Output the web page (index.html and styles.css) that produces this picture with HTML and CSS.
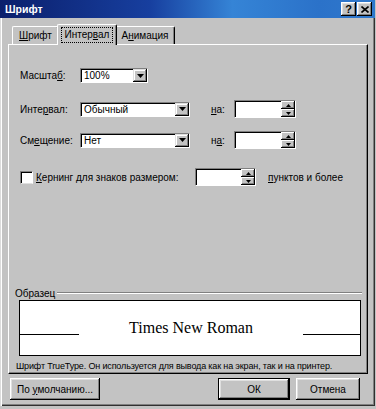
FILE: index.html
```html
<!DOCTYPE html>
<html>
<head>
    <meta charset="utf-8">
    <title>Шрифт</title>
    <link rel="stylesheet" href="styles.css">
</head>
<body>
<div class="window">
    <div class="titlebar">
        <span class="title">Шрифт</span>
        <div class="caption-btns">
            <span class="cbtn cbtn-help">?</span>
            <span class="cbtn">
                <svg width="8" height="7" viewBox="0 0 8 7"><path d="M0.5 0.5 L7.5 6.5 M7.5 0.5 L0.5 6.5" stroke="#000" stroke-width="1.6"/></svg>
            </span>
        </div>
    </div>

    <div class="tabs">
        <div class="tab tab-font"><span><u>Ш</u>рифт</span></div>
        <div class="tab tab-active"><span class="focus">Интер<u>в</u>ал</span></div>
        <div class="tab tab-anim"><span>А<u>н</u>имация</span></div>
    </div>

    <div class="panel">
        <div class="row row-scale">
            <span class="lbl">Масшта<u>б</u>:</span>
            <div class="combo combo-short">
                <span class="combo-val">100%</span>
                <span class="combo-btn"><svg width="7" height="4" viewBox="0 0 7 4"><path d="M0 0 H7 L3.5 4 Z" fill="#000"/></svg></span>
            </div>
        </div>

        <div class="row row-spacing">
            <span class="lbl">Инте<u>р</u>вал:</span>
            <div class="combo combo-long">
                <span class="combo-val">Обычный</span>
                <span class="combo-btn"><svg width="7" height="4" viewBox="0 0 7 4"><path d="M0 0 H7 L3.5 4 Z" fill="#000"/></svg></span>
            </div>
            <span class="lbl-on"><u>н</u>а:</span>
            <div class="spin">
                <span class="spin-val"></span>
                <span class="spin-btns">
                    <span class="spin-btn"><svg width="5" height="3" viewBox="0 0 5 3"><path d="M0 3 H5 L2.5 0 Z" fill="#000"/></svg></span>
                    <span class="spin-btn"><svg width="5" height="3" viewBox="0 0 5 3"><path d="M0 0 H5 L2.5 3 Z" fill="#000"/></svg></span>
                </span>
            </div>
        </div>

        <div class="row row-offset">
            <span class="lbl">См<u>е</u>щение:</span>
            <div class="combo combo-long">
                <span class="combo-val">Нет</span>
                <span class="combo-btn"><svg width="7" height="4" viewBox="0 0 7 4"><path d="M0 0 H7 L3.5 4 Z" fill="#000"/></svg></span>
            </div>
            <span class="lbl-on">н<u>а</u>:</span>
            <div class="spin">
                <span class="spin-val"></span>
                <span class="spin-btns">
                    <span class="spin-btn"><svg width="5" height="3" viewBox="0 0 5 3"><path d="M0 3 H5 L2.5 0 Z" fill="#000"/></svg></span>
                    <span class="spin-btn"><svg width="5" height="3" viewBox="0 0 5 3"><path d="M0 0 H5 L2.5 3 Z" fill="#000"/></svg></span>
                </span>
            </div>
        </div>

        <div class="row row-kern">
            <span class="checkbox"></span>
            <span class="lbl-kern"><u>К</u>ернинг для знаков размером:</span>
            <div class="spin spin-kern">
                <span class="spin-val"></span>
                <span class="spin-btns">
                    <span class="spin-btn"><svg width="5" height="3" viewBox="0 0 5 3"><path d="M0 3 H5 L2.5 0 Z" fill="#000"/></svg></span>
                    <span class="spin-btn"><svg width="5" height="3" viewBox="0 0 5 3"><path d="M0 0 H5 L2.5 3 Z" fill="#000"/></svg></span>
                </span>
            </div>
            <span class="lbl-points"><u>п</u>унктов и более</span>
        </div>

        <div class="group-head">
            <span class="group-title">Образец</span>
            <span class="group-line"></span>
        </div>
        <div class="preview">
            <span class="preview-line preview-line-left"></span>
            <span class="preview-text">Times New Roman</span>
            <span class="preview-line preview-line-right"></span>
        </div>
        <div class="desc">Шрифт TrueType. Он используется для вывода как на экран, так и на принтер.</div>
    </div>

    <div class="buttons">
        <div class="btn btn-default-font"><span>По <u>у</u>молчанию...</span></div>
        <div class="btn-spacer"></div>
        <div class="btn btn-ok"><span>ОК</span></div>
        <div class="btn btn-cancel"><span>Отмена</span></div>
    </div>
</div>
</body>
</html>
```

FILE: styles.css
```css
html, body {
    margin: 0;
    padding: 0;
    background: #c3c3c3;
}
body {
    font-family: 'Liberation Sans', Arial, sans-serif;
    font-size: 10px;
    color: #000;
}
u {
    text-decoration: underline;
    text-underline-offset: 1px;
}

.window {
    width: 375px;
    height: 406px;
    box-sizing: border-box;
    background: #c3c3c3;
    box-shadow: inset 1px 0 #dcdcdc, inset 2px 0 #fff, inset -1px -1px #303030, inset -2px -2px #808080;
}

/* title bar */
.titlebar {
    height: 18px;
    display: flex;
    align-items: center;
    justify-content: space-between;
    padding: 0 3px 0 5px;
    background: linear-gradient(to right, #0b1f6c 0%, #173f9f 40%, #3584d6 62%, #2b72c9 85%, #2f78cc 100%);
}
.title {
    color: #fff;
    font-weight: bold;
    font-size: 10.5px;
}
.caption-btns {
    display: flex;
    gap: 1px;
}
.cbtn {
    width: 15px;
    height: 14px;
    box-sizing: border-box;
    display: flex;
    align-items: center;
    justify-content: center;
    background: #c3c3c3;
    box-shadow: inset -1px -1px #000, inset 1px 1px #fff, inset -2px -2px #808080, inset 2px 2px #dfdfdf;
}
.cbtn-help {
    font-weight: bold;
    font-size: 11px;
    line-height: 14px;
}

/* tabs */
.tabs {
    display: flex;
    align-items: flex-end;
    height: 20px;
    margin-top: 6px;
    padding-left: 12px;
    position: relative;
    z-index: 1;
}
.tab {
    height: 18px;
    box-sizing: border-box;
    display: flex;
    align-items: center;
    justify-content: center;
    border-top: 1px solid #fff;
    border-left: 1px solid #fff;
    border-right: 1px solid #000;
    border-radius: 2px 2px 0 0;
    box-shadow: inset -1px 0 #808080;
    background: #c3c3c3;
}
.tab-font {
    width: 47px;
}
.tab-anim {
    width: 60px;
}
.tab-active {
    width: 60px;
    height: 21px;
    margin: 0 -2px -1px -2px;
    position: relative;
    z-index: 2;
    padding-bottom: 1px;
}
.focus {
    border: 1px dotted #000;
    padding: 1px 3px 2px 3px;
}

/* panel */
.panel {
    margin-left: 8px;
    width: 360px;
    height: 330px;
    box-sizing: border-box;
    border-top: 1px solid #fff;
    border-left: 1px solid #fff;
    border-right: 1px solid #000;
    border-bottom: 1px solid #000;
    box-shadow: inset -1px -1px #808080;
    padding-top: 23px;
}
.row {
    display: flex;
    align-items: center;
    padding-left: 11px;
}
.row-scale {
    height: 15px;
}
.row-spacing {
    height: 18px;
    margin-top: 17px;
}
.row-offset {
    height: 18px;
    margin-top: 13px;
}
.row-kern {
    height: 18px;
    margin-top: 19px;
}
.lbl {
    width: 60px;
}
.lbl-on {
    width: 23px;
    margin-left: 21px;
}

/* combo box */
.combo {
    height: 15px;
    box-sizing: border-box;
    display: flex;
    background: #fff;
    border-top: 1px solid #808080;
    border-left: 1px solid #808080;
    border-right: 1px solid #fff;
    border-bottom: 1px solid #fff;
    box-shadow: inset 1px 1px #000;
}
.combo-short {
    width: 68px;
}
.combo-long {
    width: 110px;
}
.combo-val {
    flex: 1;
    padding-left: 3px;
    line-height: 13px;
}
.combo-btn {
    width: 14px;
    display: flex;
    align-items: center;
    justify-content: center;
    background: #c3c3c3;
    box-shadow: inset -1px -1px #000, inset 1px 1px #dfdfdf, inset -2px -2px #808080, inset 2px 2px #fff;
}

/* spinner */
.spin {
    width: 62px;
    height: 18px;
    box-sizing: border-box;
    display: flex;
    background: #fff;
    border-top: 1px solid #808080;
    border-left: 1px solid #808080;
    border-right: 1px solid #fff;
    border-bottom: 1px solid #fff;
    box-shadow: inset 1px 1px #000;
}
.spin-kern {
    width: 61px;
}
.spin-val {
    flex: 1;
}
.spin-btns {
    width: 14px;
    display: flex;
    flex-direction: column;
}
.spin-btn {
    flex: 1;
    display: flex;
    align-items: center;
    justify-content: center;
    background: #c3c3c3;
    box-shadow: inset -1px -1px #000, inset 1px 1px #fff, inset -2px -2px #808080;
}

/* kerning */
.checkbox {
    width: 13px;
    height: 13px;
    box-sizing: border-box;
    background: #fff;
    border-top: 1px solid #808080;
    border-left: 1px solid #808080;
    border-right: 1px solid #fff;
    border-bottom: 1px solid #dfdfdf;
    box-shadow: inset 1px 1px #000;
}
.lbl-kern {
    width: 159px;
    margin-left: 3px;
}
.lbl-points {
    margin-left: 12px;
}

/* sample group */
.group-head {
    display: flex;
    align-items: center;
    height: 12px;
    margin-top: 101px;
    margin-left: 6px;
    margin-right: 5px;
}
.group-title {
    padding-right: 2px;
}
.group-line {
    flex: 1;
    height: 0;
    border-top: 1px solid #808080;
    border-bottom: 1px solid #fff;
}
.preview {
    margin: 1px 0 0 10px;
    width: 342px;
    height: 56px;
    box-sizing: border-box;
    border: 1px solid #000;
    background: #fff;
    display: flex;
    align-items: center;
}
.preview-line {
    height: 1px;
    background: #000;
    margin-top: 12px;
}
.preview-line-left {
    width: 59px;
}
.preview-line-right {
    width: 57px;
}
.preview-text {
    flex: 1;
    text-align: center;
    font-family: 'Liberation Serif', 'Times New Roman', serif;
    font-size: 16px;
}
.desc {
    margin: 4px 0 0 7px;
    line-height: 12px;
    font-size: 9px;
    letter-spacing: -0.15px;
    white-space: nowrap;
}

/* bottom buttons */
.buttons {
    display: flex;
    height: 22px;
    margin-top: 4px;
    padding: 0 15px 0 10px;
}
.btn {
    height: 22px;
    box-sizing: border-box;
    display: flex;
    align-items: center;
    justify-content: center;
    background: #c3c3c3;
    box-shadow: inset -1px -1px #000, inset 1px 1px #fff, inset -2px -2px #808080, inset 2px 2px #dfdfdf;
}
.btn-default-font {
    width: 90px;
}
.btn-spacer {
    flex: 1;
}
.btn-ok {
    width: 72px;
    border: 1px solid #000;
}
.btn-cancel {
    width: 64px;
    margin-left: 6px;
}
```
